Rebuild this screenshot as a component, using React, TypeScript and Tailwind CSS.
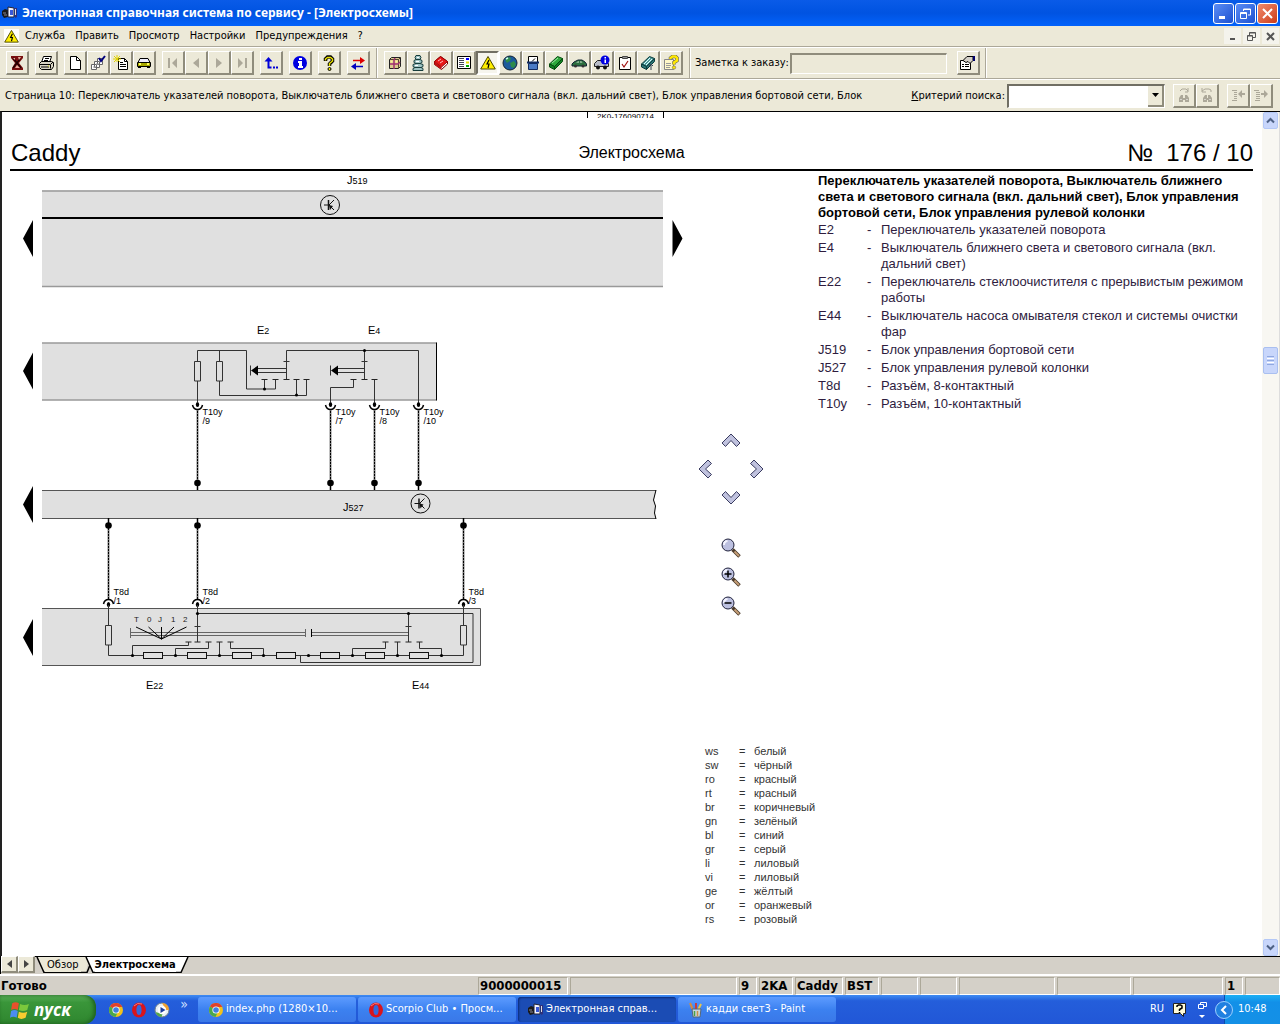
import React from "react";

const UI = "font-['DejaVu_Sans_Condensed','DejaVu_Sans',sans-serif]";

/* ---------- toolbar icons ---------- */

function Ico({ children, size = 16 }: { children: React.ReactNode; size?: number }) {
  return (
    <svg width={size} height={size} viewBox="0 0 16 16" fill="none" aria-hidden="true">
      {children}
    </svg>
  );
}

const icons: Record<string, React.ReactNode> = {
  exit: (
    <>
      <path d="M2 1h12v2l-4 5 4 5v2H3v-2l3-5-4-5z" fill="#7a1010" />
      <path d="M4 3l8 10M11 4l-7 9" stroke="#200" strokeWidth="1.500" />
      <path d="M9 2h3l-2 3zM6 13h5l-3-3zM4 3h2v2z" fill="#e9b0a0" />
    </>
  ),
  print: (
    <>
      <path d="M5.500 1.500h8l-2 6h-8z" fill="#fff" stroke="#000" />
      <path d="M7 3.500h4M6 5.500h4" stroke="#000" />
      <path d="M1.500 8.500l2-2h10l2 1v4l-2 3h-10l-2-2z" fill="#d8d4c4" stroke="#000" />
      <path d="M1.500 9.500h11v4M13 9l2-2M3 12h8" stroke="#000" />
      <path d="M10 11h1" stroke="#dd0" />
    </>
  ),
  page: (
    <>
      <path d="M3.500 1.500h6l4 4v9h-10z" fill="#fff" stroke="#000" />
      <path d="M9.500 1.500v4h4" stroke="#000" />
    </>
  ),
  pages: (
    <>
      <path d="M7.500 3.500h5v6h-5zM4.500 6.500h5v6h-5zM1.500 9.500h5v5h-5z" fill="#fff" stroke="#666" />
      <path d="M3 12h3M6 9h3" stroke="#999" />
      <path d="M9 3l2 3 4-5" stroke="#00007c" strokeWidth="2" />
    </>
  ),
  newdoc: (
    <>
      <path d="M5.500 3.500h6l3 3v8h-9z" fill="#fff" stroke="#000" />
      <path d="M11.500 3.500v3h3M7 7.500h3M7 9.500h6M7 11.500h6" stroke="#000" />
      <path d="M4 0v7M0 4h8M1 1l6 6M7 1L1 7" stroke="#e2d400" />
    </>
  ),
  car: (
    <>
      <path d="M4 3.500h8l2 4H2z" fill="#eef" stroke="#000" />
      <path d="M1.500 7.500h13v4h-13z" fill="#a8a800" stroke="#000" />
      <path d="M2 12h3v1H2zM11 12h3v1h-3z" fill="#000" />
      <path d="M3 9h2M11 9h2" stroke="#ff6" strokeWidth="2" />
    </>
  ),
  first: <path d="M3 3h2v10H3zM12 3v10L7 8z" fill="#aca899" />,
  prev: <path d="M11 3v10L5 8z" fill="#aca899" />,
  next: <path d="M5 3v10l6-5z" fill="#aca899" />,
  last: <path d="M11 3h2v10h-2zM4 3v10l5-5z" fill="#aca899" />,
  back: (
    <>
      <path d="M5.500 4v8.500h3" stroke="#0000d8" strokeWidth="2" />
      <path d="M1.500 6.500l4-4.500 4 4.500z" fill="#0000d8" />
      <path d="M10 11.500h2v2h-2zM13 11.500h2v2h-2z" fill="#0000d8" />
    </>
  ),
  info: (
    <>
      <circle cx="8" cy="8" r="7" fill="#0000e0" />
      <path d="M7 3h3v2H7zM6 6h4v5h1v2H6v-2h1V8H6z" fill="#fff" />
    </>
  ),
  help: (
    <>
      <path d="M4.500 6V4l2-2h3l2 2v2L8.500 9v2" stroke="#000" strokeWidth="3.500" />
      <path d="M4.500 5.500V4l2-1.500h3l2 1.500v2L8.500 8.500V11" stroke="#e8e000" strokeWidth="1.500" />
      <circle cx="8.500" cy="14" r="1.500" fill="#e8e000" stroke="#000" />
    </>
  ),
  swap: (
    <>
      <path d="M3 5.500h8" stroke="#d00" strokeWidth="1.500" />
      <path d="M10 2l5 3.500L10 9z" fill="#d00" />
      <path d="M5 11.500h8" stroke="#0000c0" strokeWidth="1.500" />
      <path d="M6 8l-5 3.500L6 15z" fill="#0000c0" />
    </>
  ),
  box: (
    <>
      <path d="M2.500 4.500l2-2h9v9l-2 2h-9z" fill="#dccb8c" stroke="#222" />
      <path d="M2.500 4.500h9v9M11.500 4.500l2-2" stroke="#543" />
      <path d="M8 3L7 5v9M3 9h8l2-2" stroke="#a03070" strokeWidth="1.500" />
      <path d="M3.500 5.500h2v2h-2zM8.500 5.500h2v2h-2z" fill="#fff39a" />
    </>
  ),
  parts: (
    <>
      <path d="M6 .5h4l1 2-1 2 2 1v2l-2 1 3 1v2l-2 1 2 1v2H3v-2l2-1-2-1v-2l3-1-2-1v-2l2-1-1-2z" fill="#9fc4c4" stroke="#163c3c" />
      <path d="M6 4.500h4M6 8.500h4M5 12.500h6" stroke="#163c3c" />
      <path d="M7 2.500h2M6 6.500h3M5 10.500h3" stroke="#fff" />
    </>
  ),
  book: (
    <>
      <path d="M1.500 9.500v-3l6-5 7 5v2.500l-6 5.500z" fill="#fff" stroke="#700" />
      <path d="M1.500 6.500l6-5 7 5-6 5.500z" fill="#e81818" stroke="#900" />
      <path d="M1.500 6.500v3l7 5v-2.500z" fill="#c01010" />
      <path d="M5 6l3-2M7 8l3-2" stroke="#fbb" />
    </>
  ),
  list: (
    <>
      <path d="M1.500 1.500h13v12h-13z" fill="#fff" stroke="#000" />
      <path d="M3 3.500h5M3 5.500h5M3 7.500h5M3 9.500h5M3 11.500h5" stroke="#445" />
      <path d="M10 4h3" stroke="#00f" strokeWidth="2" />
      <path d="M10 7.500h3" stroke="#e6d800" strokeWidth="2" />
      <path d="M10 11h3" stroke="#0a0" strokeWidth="2" />
    </>
  ),
  warn: (
    <>
      <path d="M8 1.500L15.300 14H.7z" fill="#ffee00" stroke="#4a4600" strokeLinejoin="round" />
      <path d="M9 5l-2 4h2l-1 4" stroke="#000" strokeWidth="1.200" />
    </>
  ),
  globe: (
    <>
      <circle cx="8" cy="8" r="7" fill="#1c5a9c" stroke="#123" />
      <path d="M3 5l3-3 3 1-1 3-3 2zM8 8l4-2 2 3-2 4-3-1z" fill="#2e8b4a" />
      <path d="M4 4l2-1" stroke="#cfe" strokeWidth="1.500" />
    </>
  ),
  meter: (
    <>
      <path d="M3.500 1.500h9v6h-9z" fill="#fff" stroke="#000" />
      <path d="M7 6.500l3-3" stroke="#000" />
      <path d="M3.500 8.500h9v6h-9z" fill="#4a7ac4" stroke="#112a60" />
      <path d="M2 7.500h12" stroke="#112a60" strokeWidth="2" />
    </>
  ),
  green: (
    <>
      <path d="M1.500 9l8-7.500 5 2-8 8z" fill="#2ea83c" stroke="#064c10" />
      <path d="M1.500 9l5 2.500v3l-5-2.500zM6.500 11.500l8-8v3l-8 8z" fill="#118022" stroke="#064c10" />
      <path d="M4 8l6-5" stroke="#9de6a4" />
    </>
  ),
  greencar: (
    <>
      <path d="M1 9l2-2 4-2h4l3 2 1.500 2v2H1z" fill="#2c7040" stroke="#123" />
      <path d="M5 7.500l2-1h1v1zM9 6.500h1.500l1 1H9z" fill="#d8e8d8" />
      <circle cx="4.500" cy="11" r="1.500" fill="#333" />
      <circle cx="12" cy="11" r="1.500" fill="#333" />
    </>
  ),
  carinfo: (
    <>
      <path d="M.5 11.500V8.500l3-3h5l4 3h2v3z" fill="#b8bcc8" stroke="#222" />
      <circle cx="4" cy="12.500" r="2" fill="#111" />
      <circle cx="11" cy="12.500" r="2" fill="#111" />
      <circle cx="11" cy="5" r="4.500" fill="#0000e0" />
      <path d="M10.500 2H12v1.500h-1.500zM10.500 4.500H12V8h-1.500z" fill="#fff" />
    </>
  ),
  check: (
    <>
      <path d="M2.500 2.500h11v12h-11z" fill="#fff" stroke="#000" />
      <path d="M5.500 1.500h5v2h-5z" fill="#999" stroke="#444" />
      <path d="M5 9l2 3 4-6" stroke="#a01010" strokeWidth="1.200" />
    </>
  ),
  teal: (
    <>
      <path d="M1.500 9l8-7.500 5 2-8 8z" fill="#4f9a9a" stroke="#0c3c3c" />
      <path d="M1.500 9l5 2.500v3l-5-2.500zM6.500 11.500l8-8v3l-8 8z" fill="#2a7474" stroke="#0c3c3c" />
      <path d="M4 9l6-6M6 10l6-6" stroke="#dff" />
      <path d="M11 15V9M9 11l2-2 2 2" stroke="#345" />
    </>
  ),
  question: (
    <>
      <path d="M1.500 4.500h9v10h-9z" fill="#fff8c8" stroke="#888" />
      <path d="M3 8.500h5M3 10.500h5M3 12.500h4" stroke="#999" />
      <path d="M7.500 4V3l2-1.500h3L14 3v2.500l-3 2v2" stroke="#555" strokeWidth="3.500" />
      <path d="M7.500 4V3l2-1.500h3L14 3v2.500l-3 2v2" stroke="#ffe800" strokeWidth="2.500" />
      <circle cx="11" cy="12.500" r="1.700" fill="#ffe800" stroke="#555" strokeWidth=".5" />
    </>
  ),
  note: (
    <>
      <path d="M.5 5.500h10v9H.5z" fill="#fff" stroke="#000" />
      <path d="M2 9.500h2M5 9.500h4M2 11.500h2M5 11.500h4" stroke="#000" />
      <path d="M3 5.500l4-4h6v4l-3 3-2-2-2 1z" fill="#d4d0c8" stroke="#000" />
      <path d="M13 1h2v5h-2z" fill="#00006c" />
    </>
  ),
  findNext: (
    <>
      <path d="M3 15v-4l2-3h2v3h2V8h2l2 3v4H9v-2H7v2z" fill="#aca899" />
      <path d="M4 4l2-2h4l2 2M12 1v4H9" stroke="#aca899" />
      <path d="M4.500 12.500h1M10.500 12.500h1" stroke="#fff" />
    </>
  ),
  findPrev: (
    <>
      <path d="M4 15v-4l2-3h2v3h1V8h2l2 3v4H9v-2H8v2z" fill="#aca899" />
      <path d="M12 5V3l-2-1H6L3 4M3 1v4h4" stroke="#aca899" />
      <path d="M5.500 12.500h1M10.500 12.500h1" stroke="#fff" />
    </>
  ),
  outdent: (
    <>
      <path d="M2 3.500h5M4 5.500h3M4 7.500h3M4 9.500h3M4 11.500h3M2 13.500h5" stroke="#aca899" />
      <path d="M8 7l4-4v3h3v2h-3v3z" fill="#aca899" />
    </>
  ),
  indent: (
    <>
      <path d="M1 3.500h5M3 5.500h4M3 7.500h4M3 9.500h4M3 11.500h4M2 13.500h5" stroke="#aca899" />
      <path d="M15 7l-4-4v3H8v2h3v3z" fill="#aca899" />
    </>
  ),
};

function AppGlyph({ size = 16 }: { size?: number }) {
  return (
    <Ico size={size}>
      <path d="M0 6l3-2 3 1v7l-4 1-2-3z" fill="#1a1a1a" />
      <path d="M1 8h3M2 10h3" stroke="#889" />
      <path d="M6 2l6 1v9H6z" fill="#f4f4ff" stroke="#223" />
      <path d="M8 5h3v5H8z" fill="#3858d8" />
      <path d="M12 3h3v9l-2 1z" fill="#30307c" />
      <path d="M13 4h1v6h-1z" fill="#ddd" />
    </Ico>
  );
}

function ChromeGlyph() {
  return (
    <Ico>
      <circle cx="8" cy="8" r="7" fill="#f2c21c" />
      <path d="M8 8L2 4.400A7 7 0 0 1 14.200 5H8z" fill="#e0402c" />
      <path d="M8 8L2 4.400A7 7 0 0 0 7.500 15L10 9.500z" fill="#4aa84c" />
      <circle cx="8" cy="8" r="3.600" fill="#fff" />
      <circle cx="8" cy="8" r="2.800" fill="#3f7fe0" />
    </Ico>
  );
}

function OperaGlyph() {
  return (
    <Ico>
      <ellipse cx="8" cy="8" rx="7" ry="7.500" fill="#d8141c" />
      <path d="M3 4a7 7 0 0 1 8-2" stroke="#f47a7a" />
      <ellipse cx="8" cy="8" rx="2.600" ry="5" fill="#3468dc" />
    </Ico>
  );
}

function MediaGlyph() {
  return (
    <Ico>
      <circle cx="8" cy="8" r="7" fill="#e8eef4" stroke="#6b7c8c" />
      <path d="M8 1a7 7 0 0 1 7 7h-3z" fill="#f0a030" />
      <path d="M1.500 10a7 7 0 0 0 6 5l1-3z" fill="#55a848" />
      <circle cx="8" cy="8" r="4.200" fill="#fff" />
      <path d="M6.500 5l5 3-5 3z" fill="#1c3c9c" />
    </Ico>
  );
}

function PaintGlyph() {
  return (
    <Ico>
      <path d="M5 8L2 1" stroke="#d88a3c" strokeWidth="2" />
      <path d="M8 8V1" stroke="#c83c3c" strokeWidth="2" />
      <path d="M10 8l3-6" stroke="#e8c84c" strokeWidth="2" />
      <path d="M4 7h9l-1 8H5z" fill="#c8d4dc" stroke="#567" />
      <path d="M6.500 9v5" stroke="#48a048" strokeWidth="1.500" />
      <path d="M9.500 9v5" stroke="#c89048" strokeWidth="1.500" />
    </Ico>
  );
}

/* ---------- toolbar parts ---------- */

function ToolButton({ icon, label, active = false, disabled = false }: { icon: string; label: string; active?: boolean; disabled?: boolean }) {
  return (
    <button
      type="button"
      aria-label={label}
      disabled={disabled}
      className={
        active
          ? "flex h-6 w-[23px] shrink-0 items-center justify-center border-2 border-t-[#716f64] border-l-[#716f64] border-r-white border-b-white bg-[#f6f5ee]"
          : "flex h-6 w-[23px] shrink-0 items-center justify-center border-t border-l border-r-2 border-b-2 border-t-white border-l-white border-r-[#8f8c7c] border-b-[#8f8c7c] bg-[#ece9d8]"
      }
    >
      <Ico>{icons[icon]}</Ico>
    </button>
  );
}

function Group({ children }: { children: React.ReactNode }) {
  return <div className="flex">{children}</div>;
}

function Divider() {
  return <div className="h-[30px] w-[2px] shrink-0 border-r border-l border-r-white border-l-[#aca899]" />;
}

/* ---------- wiring diagram ---------- */

function Label({ x, y, head, sub }: { x: number; y: number; head: string; sub: string }) {
  return (
    <text x={x} y={y} fontSize="11" fill="#000">
      {head}
      <tspan fontSize="9">{sub}</tspan>
    </text>
  );
}

function Transistor({ x, y }: { x: number; y: number }) {
  return (
    <g stroke="#111" fill="none">
      <circle cx={x} cy={y} r="9.500" />
      <path d={`M${x - 6} ${y}h6M${x + 4} ${y - 5}l-5 5l5 5`} />
      <path d={`M${x - 1.5} ${y - 5}v10`} strokeWidth="1.500" />
      <path d={`M${x - 1} ${y}l4 1l-3 4z`} fill="#111" stroke="none" />
    </g>
  );
}

function Ticks({ xs, y }: { xs: number[]; y: number }) {
  return <path d={xs.map((x) => `M${x - 3} ${y}h6`).join("")} stroke="#222" />;
}

function Dots({ points, r }: { points: number[][]; r: number }) {
  return (
    <g fill="#000">
      {points.map(([x, y]) => (
        <circle key={`${x}-${y}`} cx={x} cy={y} r={r} />
      ))}
    </g>
  );
}

const upperPins = [
  { x: 197.5, pin: "/9" },
  { x: 330.5, pin: "/7" },
  { x: 374.5, pin: "/8" },
  { x: 418.5, pin: "/10" },
];
const lowerPins = [
  { x: 108.5, pin: "/1" },
  { x: 197.5, pin: "/2" },
  { x: 463.5, pin: "/3" },
];
const chainResistors = [143.5, 187.5, 232.5, 276.5, 320.5, 365.5, 409.5];
const modes: [number, string][] = [
  [134, "T"],
  [147, "0"],
  [158, "J"],
  [171, "1"],
  [183, "2"],
];

function Diagram() {
  return (
    <svg
      width="688"
      height="530"
      viewBox="2 171 688 530"
      fill="none"
      className="shrink-0 font-['Liberation_Sans_Narrow','Liberation_Sans',sans-serif]"
      role="img"
      aria-label="Электросхема"
    >
      <path
        d="M42 190.500h621v96H42zM42 343h394.500v57H42zM42 490.500h614l-2 9 1.500 7-1 7 1.500 5H42zM42 608.500h438.500v57H42z"
        fill="#e0e0e0"
      />
      <path d="M42 191h621M42 286.500h621M42 343h394.500M42 400h394.500" stroke="#999" strokeWidth="1.500" />
      <path d="M42 218h621" stroke="#000" strokeWidth="2" />
      <path d="M436.500 342.500v58" stroke="#000" />
      <path d="M42 490.500h614M42 518.500h614M42 608.500h438.500v57H42" stroke="#555" />
      <path d="M656 490l-2.500 10 2 6-1 7 1.500 6" stroke="#000" />
      <path d="M33 220v37l-10-18.500zM33 352.500v37L23 371zM33 486v37l-10-18.500zM33 619v37l-10-18.500zM672.500 220v37l10-18.500z" fill="#000" />
      <Transistor x={330} y={205} />
      <Transistor x={420.500} y={503.500} />

      <g stroke="#333">
        <path d="M197.500 402V381M197.500 361.500v-11h49v38.500h29v-9.500M264.500 379.500v9.500M219.500 350.500v11M219.500 381v14.500h87v-16M296.500 379.500v16" />
        <path d="M194.500 361.500h6v19.500h-6zM216.500 361.500h6v19.500h-6z" />
        <path d="M286.500 379.500v-29h132v52M283.500 361.500h6M258 368.500h28.500M258 372.500h28.500M250.500 365.500v10" />
        <path d="M364.500 350.500v29M361.500 361.500h6M337 368.500h27.500M337 372.500h27.500M330.500 365.500v10M353.500 379.500v8h-23V402M374.500 379.500V402" />
      </g>
      <path d="M251 370.500l7-5v10zM331 370.500l7-5v10z" fill="#000" />
      <Ticks xs={[264.5, 275.5, 286.5, 296.5, 306.5, 353.5, 364.5, 374.500]} y={379.500} />
      <Dots points={[[264.5, 389], [296.5, 395], [364.5, 350.5]]} r={1.500} />

      {upperPins.map(({ x, pin }) => (
        <g key={pin}>
          <path d={`M${x} 410V490`} stroke="#000" strokeWidth="1.500" />
          <path d={`M${x} 410V480`} stroke="#777" strokeDasharray="1 2" strokeWidth="1" />
          <path d={`M${x - 5} 405q1 4.500 5 4.500q4 0 5 -4.500`} stroke="#000" strokeWidth="1.500" />
          <ellipse cx={x} cy={404.500} rx={1.700} ry={2.500} fill="#000" />
          <circle cx={x} cy={483} r={3.300} fill="#000" />
          <text x={x + 5} y={415} fontSize="9" fill="#000">T10y</text>
          <text x={x + 5} y={424} fontSize="9" fill="#000">{pin}</text>
        </g>
      ))}

      {lowerPins.map(({ x, pin }) => (
        <g key={pin}>
          <path d={`M${x} 518V600`} stroke="#000" strokeWidth="1.500" />
          <path d={`M${x} 530V598`} stroke="#777" strokeDasharray="1 2" strokeWidth="1" />
          <path d={`M${x - 5} 604q1 -4.500 5 -4.500q4 0 5 4.500`} stroke="#000" strokeWidth="1.500" />
          <ellipse cx={x} cy={604.500} rx={1.700} ry={2.500} fill="#000" />
          <circle cx={x} cy={525.500} r={3.300} fill="#000" />
          <text x={x + 5} y={595} fontSize="9" fill="#000">T8d</text>
          <text x={x + 5} y={604} fontSize="9" fill="#000">{pin}</text>
        </g>
      ))}

      <g stroke="#333">
        <path d="M108.500 605v20M108.500 645v10.500h355V645M463.500 605v20" />
        <path d="M105.500 625.500h6v19.500h-6zM460.500 625.500h6v19.500h-6z" fill="#e0e0e0" />
        <path d="M130.500 628v10M130.500 632.500h175M130.500 635.500h175M305.500 629v8M311.500 632.500h97M311.500 635.500h97" stroke="#666" />
        <path d="M136 627l25.500 12M148.500 627l13 12M161.500 627v12M174 627l-12.500 12M186.500 627l-25 12M311.500 629v8" stroke="#000" />
        <path d="M197.500 605v37M194.500 626.500h6M197.500 613.500h275.500v49H300.500v-7M408.500 613.500v28.500M405.500 626.500h6" />
        <path d="M188.500 642v3.500h-56v10M208.500 642v6.500h-33v7M219.500 642v13.500M230.500 642v6.500h33v7" />
        <path d="M385.500 642v6.500h-33v7M397.500 642v13.500M419.500 642v6.500h22v7" />
        {chainResistors.map((x) => (
          <rect key={x} x={x} y={652.500} width={19} height={6} fill="#e0e0e0" stroke="#111" />
        ))}
      </g>
      <Ticks xs={[188.5, 197.5, 208.5, 219.5, 230.5, 385.5, 397.5, 408.5, 419.500]} y={642} />
      <Dots
        points={[[132.5, 655.5], [175.5, 655.5], [219.5, 655.5], [263.5, 655.5], [308.5, 655.5], [352.5, 655.5], [397.5, 655.5], [441.5, 655.5], [197.5, 613.5], [408.5, 613.5]]}
        r={1.600}
      />
      {modes.map(([x, t]) => (
        <text key={t} x={x} y={622} fontSize="8" fill="#222">
          {t}
        </text>
      ))}

      <Label x={347} y={184} head="J" sub="519" />
      <Label x={257} y={334} head="E" sub="2" />
      <Label x={368} y={334} head="E" sub="4" />
      <Label x={343} y={511} head="J" sub="527" />
      <Label x={146} y={689} head="E" sub="22" />
      <Label x={412} y={689} head="E" sub="44" />
    </svg>
  );
}

/* ---------- viewer controls ---------- */

const chevrons: Record<string, string> = {
  up: "M10 4l9 9-3.500 3.500-5.500-6-5.500 6L1 13z",
  down: "M10 16l9-9-3.500-3.500-5.500 6-5.500-6L1 7z",
  left: "M4 10l9-9 3.500 3.500-6 5.500 6 5.500L13 19z",
  right: "M16 10L7 1 3.500 4.500l6 5.500-6 5.500L7 19z",
};

function Chevron({ dir, label, place }: { dir: string; label: string; place: string }) {
  return (
    <button type="button" aria-label={label} className={place}>
      <svg width="20" height="20" viewBox="0 0 20 20">
        <path d={chevrons[dir]} fill="#c0c2de" stroke="#3a3c60" />
      </svg>
    </button>
  );
}

function Magnifier({ sign, label }: { sign: string; label: string }) {
  return (
    <button type="button" aria-label={label} className="flex h-[29px] w-[26px] items-center justify-center">
      <svg width="20" height="20" viewBox="0 0 20 20" fill="none">
        <path d="M11.500 11.500l7 7" stroke="#4c3c2c" strokeWidth="3.500" />
        <path d="M13.500 13.500l4.500 4.500" stroke="#c8a078" strokeWidth="1.800" />
        <circle cx="7" cy="7" r="6" fill="#bcc0e0" stroke="#20223c" />
        <path d="M3 7a4 4 0 0 1 3.500-4" stroke="#f4f4ff" strokeWidth="2" />
        {sign === "plus" && <path d="M7 3.500v7M3.500 7h7" stroke="#000" strokeWidth="1.500" />}
        {sign === "minus" && <path d="M3.500 7h7" stroke="#000" strokeWidth="1.500" />}
      </svg>
    </button>
  );
}

const colours: [string, string][] = [
  ["ws", "белый"],
  ["sw", "чёрный"],
  ["ro", "красный"],
  ["rt", "красный"],
  ["br", "коричневый"],
  ["gn", "зелёный"],
  ["bl", "синий"],
  ["gr", "серый"],
  ["li", "лиловый"],
  ["vi", "лиловый"],
  ["ge", "жёлтый"],
  ["or", "оранжевый"],
  ["rs", "розовый"],
];

const legend: [string, string[]][] = [
  ["E2", ["Переключатель указателей поворота"]],
  ["E4", ["Выключатель ближнего света и светового сигнала (вкл.", "дальний свет)"]],
  ["E22", ["Переключатель стеклоочистителя с прерывистым режимом", "работы"]],
  ["E44", ["Выключатель насоса омывателя стекол и системы очистки", "фар"]],
  ["J519", ["Блок управления бортовой сети"]],
  ["J527", ["Блок управления рулевой колонки"]],
  ["T8d", ["Разъём, 8-контактный"]],
  ["T10y", ["Разъём, 10-контактный"]],
];

function ScrollButton({ up }: { up: boolean }) {
  return (
    <button
      type="button"
      aria-label={up ? "Прокрутить вверх" : "Прокрутить вниз"}
      className="flex h-[17px] w-[15px] items-center justify-center rounded-xs border border-[#b4c8f6] bg-[#c8d6fb]"
    >
      <svg width="9" height="9" viewBox="0 0 9 9" fill="none">
        <path d={up ? "M1 6.500l3.500-3.500L8 6.500" : "M1 2.500L4.500 6 8 2.500"} stroke="#4d6185" strokeWidth="2" />
      </svg>
    </button>
  );
}

function Viewer() {
  return (
    <main className="flex min-h-0 flex-1 overflow-hidden border-t border-l-2 border-black border-l-[#222] bg-white font-['Liberation_Sans',Arial,sans-serif]">
      <div className="flex min-w-0 flex-1 flex-col pr-[9px] pl-2">
        <div className="h-[6px] overflow-hidden pl-[577px]">
          <span className="block h-[10px] w-[77px] border-x border-black pt-px text-center text-[8px] leading-[8px]">2K0-176090714</span>
        </div>
        <header className="grid h-[53px] grid-cols-3 items-end border-b-2 border-black pb-[2px]">
          <h1 className="pl-px text-[24px] leading-[28px]">Caddy</h1>
          <h2 className="pb-1 text-center text-[16px] leading-5">Электросхема</h2>
          <p className="text-right text-[24px] leading-[28px] whitespace-pre">№  176 / 10</p>
        </header>
        <div className="-ml-2 flex flex-1">
          <Diagram />
          <div className="flex w-32 shrink-0 flex-col justify-between pt-[254px] pb-[30px]">
            <div className="flex flex-col gap-[21px] pl-[2px]">
              <div className="grid w-[78px] grid-cols-3 grid-rows-[29px_29px_29px] items-center justify-items-center">
                <Chevron dir="up" label="Вверх" place="col-start-2" />
                <Chevron dir="left" label="Влево" place="col-start-1 row-start-2" />
                <Chevron dir="right" label="Вправо" place="col-start-3 row-start-2" />
                <Chevron dir="down" label="Вниз" place="col-start-2 row-start-3" />
              </div>
              <div className="flex w-[78px] flex-col items-center">
                <Magnifier sign="" label="Исходный размер" />
                <Magnifier sign="plus" label="Увеличить" />
                <Magnifier sign="minus" label="Уменьшить" />
              </div>
            </div>
            <table className="ml-[15px] w-28 text-[11px] leading-[14px] text-[#333]">
              <tbody>
                {colours.map(([code, name]) => (
                  <tr key={code}>
                    <td className="w-[34px] p-0">{code}</td>
                    <td className="w-[15px] p-0">=</td>
                    <td className="p-0">{name}</td>
                  </tr>
                ))}
              </tbody>
            </table>
          </div>
          <section className="min-w-0 flex-1 pt-[2px] text-[13px] leading-4">
            <h3 className="font-bold whitespace-nowrap">
              Переключатель указателей поворота, Выключатель ближнего
              <br />
              света и светового сигнала (вкл. дальний свет), Блок управления
              <br />
              бортовой сети, Блок управления рулевой колонки
            </h3>
            <dl className="flex flex-col gap-[2px] pt-px text-[#2e1c3e]">
              {legend.map(([code, lines]) => (
                <div key={code} className="flex">
                  <dt className="flex w-[63px] shrink-0">
                    <span className="w-[49px]">{code}</span>
                    <span>-</span>
                  </dt>
                  <dd className="whitespace-nowrap">
                    {lines.map((l) => (
                      <span key={l} className="block">
                        {l}
                      </span>
                    ))}
                  </dd>
                </div>
              ))}
            </dl>
          </section>
        </div>
      </div>
      <div className="flex w-[18px] shrink-0 flex-col items-center border-r border-[#ddd] bg-[#f8f7f2]">
        <ScrollButton up />
        <div className="flex-[218]" />
        <div className="flex h-[27px] w-[15px] flex-col items-center justify-center gap-px rounded-xs border border-[#a9bff0] bg-[#c8d6fb]">
          <i className="h-px w-[7px] bg-[#8fa8e0]" />
          <i className="h-px w-[7px] bg-white" />
          <i className="h-px w-[7px] bg-[#8fa8e0]" />
          <i className="h-px w-[7px] bg-white" />
          <i className="h-px w-[7px] bg-[#8fa8e0]" />
        </div>
        <div className="flex-[564]" />
        <ScrollButton up={false} />
      </div>
    </main>
  );
}

/* ---------- window frame ---------- */

function TitleBar() {
  const base = "flex size-[21px] items-center justify-center rounded-[3px] border border-white";
  return (
    <div className="flex h-[26px] shrink-0 items-center bg-linear-to-b from-[#0a5be8] via-[#0053e1] to-[#0362fb] pr-[2px] pl-[2px]">
      <AppGlyph />
      <h1 className="flex-1 pl-1 font-['Noto_Sans',sans-serif] text-[12px] leading-4 font-bold whitespace-nowrap text-white">
        Электронная справочная система по сервису - [Электросхемы]
      </h1>
      <button type="button" aria-label="Свернуть" className={`${base} mr-px bg-linear-to-br from-[#5b8cf5] to-[#1d50d0]`}>
        <svg width="13" height="13" viewBox="0 0 13 13"><path d="M2 9h6v3H2z" fill="#fff" /></svg>
      </button>
      <button type="button" aria-label="Восстановить" className={`${base} mr-px bg-linear-to-br from-[#5b8cf5] to-[#1d50d0]`}>
        <svg width="13" height="13" viewBox="0 0 13 13" fill="none" stroke="#fff"><path d="M4.500 4V2h7v6H9M4.500 2.500h7M1.500 5.500h6v6h-6zM1.500 6.500h6" /></svg>
      </button>
      <button type="button" aria-label="Закрыть" className={`${base} bg-linear-to-br from-[#f08a6c] to-[#cc3a12]`}>
        <svg width="13" height="13" viewBox="0 0 13 13" fill="none" stroke="#fff" strokeWidth="2"><path d="M2 2l9 9M11 2l-9 9" /></svg>
      </button>
    </div>
  );
}

function MenuBar() {
  const items = ["Служба", "Править", "Просмотр", "Настройки", "Предупреждения", "?"];
  const mdi = "flex h-4 w-[17px] items-center justify-center bg-[#f4f3ec]";
  return (
    <div className="flex h-[21px] shrink-0 items-center border-b border-[#aca899] pl-1">
      <span className="flex h-[15px] w-[15px] items-center justify-center bg-white">
        <Ico size={15}>{icons.warn}</Ico>
      </span>
      <nav className="flex flex-1 gap-[10px] pl-[6px]">
        {items.map((i) => (
          <button key={i} type="button" className="text-[11px] leading-4">
            {i}
          </button>
        ))}
      </nav>
      <div className="flex gap-[2px] pr-px">
        <button type="button" aria-label="Свернуть документ" className={mdi}>
          <svg width="9" height="9" viewBox="0 0 9 9"><path d="M2 6h5v2H2z" fill="#555" /></svg>
        </button>
        <button type="button" aria-label="Восстановить документ" className={mdi}>
          <svg width="9" height="9" viewBox="0 0 9 9" fill="none" stroke="#555"><path d="M2.500 3V.5h6v5H6M2.500 1h6M.5 3.500h5v5h-5zM.5 4h5" /></svg>
        </button>
        <button type="button" aria-label="Закрыть документ" className={mdi}>
          <svg width="9" height="9" viewBox="0 0 9 9" fill="none" stroke="#555" strokeWidth="2"><path d="M1 1l7 7M8 1L1 8" /></svg>
        </button>
      </div>
    </div>
  );
}

function Toolbar() {
  return (
    <div className="flex h-8 shrink-0 items-center border-t border-b border-t-white border-b-[#aca899] pl-[6px]">
      <div className="flex gap-[6px]">
        <ToolButton icon="exit" label="Выход" />
        <ToolButton icon="print" label="Печать" />
        <Group>
          <ToolButton icon="page" label="Новый заказ" />
          <ToolButton icon="pages" label="Выбор заказа" />
          <ToolButton icon="newdoc" label="Новый документ" />
          <ToolButton icon="car" label="Автомобиль" />
        </Group>
        <Group>
          <ToolButton icon="first" label="Первая страница" disabled />
          <ToolButton icon="prev" label="Предыдущая страница" disabled />
          <ToolButton icon="next" label="Следующая страница" disabled />
          <ToolButton icon="last" label="Последняя страница" disabled />
        </Group>
        <ToolButton icon="back" label="Назад" />
        <ToolButton icon="info" label="Информация" />
        <ToolButton icon="help" label="Справка" />
        <ToolButton icon="swap" label="Переключить" />
      </div>
      <div className="flex items-center gap-[6px] pl-[6px]">
        <Divider />
        <Group>
          <ToolButton icon="box" label="Каталог" />
          <ToolButton icon="parts" label="Узлы" />
          <ToolButton icon="book" label="Руководство" />
          <ToolButton icon="list" label="Таблица" />
          <ToolButton icon="warn" label="Электросхемы" active />
          <ToolButton icon="globe" label="Сеть" />
          <ToolButton icon="meter" label="Измерения" />
          <ToolButton icon="green" label="Обслуживание" />
          <ToolButton icon="greencar" label="Кузов" />
          <ToolButton icon="carinfo" label="Данные автомобиля" />
          <ToolButton icon="check" label="Контрольный лист" />
          <ToolButton icon="teal" label="Литература" />
          <ToolButton icon="question" label="Вопросы" />
        </Group>
        <Divider />
      </div>
      <label htmlFor="note" className="pl-1 text-[11px] leading-4 whitespace-nowrap">
        Заметка к заказу:
      </label>
      <input
        id="note"
        className="mr-[10px] ml-px h-[21px] w-[157px] border border-t-2 border-l-2 border-t-[#8f8c7c] border-r-white border-b-white border-l-[#8f8c7c] bg-[#ece9d8] px-1 text-[11px]"
      />
      <div className="flex items-center gap-[5px]">
        <ToolButton icon="note" label="Открыть заметку" />
        <Divider />
      </div>
    </div>
  );
}

function SearchBar() {
  return (
    <div className="flex h-8 shrink-0 items-center border-t border-white pr-[7px] pl-[5px]">
      <p className="flex-1 text-[11px] leading-4 whitespace-nowrap">
        Страница 10: Переключатель указателей поворота, Выключатель ближнего света и светового сигнала (вкл. дальний свет), Блок управления бортовой сети, Блок
      </p>
      <label htmlFor="criterion" className="text-[11px] leading-4 whitespace-nowrap">
        <u>К</u>ритерий поиска:
      </label>
      <div className="relative mr-2 ml-[2px] flex h-6 w-[158px] border border-t-2 border-l-2 border-t-[#716f64] border-r-white border-b-white border-l-[#716f64] bg-white">
        <select id="criterion" className="h-full w-full appearance-none bg-transparent px-1 text-[11px]">
          <option></option>
        </select>
        <span className="pointer-events-none absolute inset-y-0 right-0 flex w-4 items-center justify-center border-r-2 border-b-2 border-[#8f8c7c] bg-[#ece9d8]">
          <svg width="7" height="4" viewBox="0 0 7 4"><path d="M0 0h7L3.500 4z" /></svg>
        </span>
      </div>
      <div className="flex gap-2">
        <Group>
          <ToolButton icon="findNext" label="Найти далее" disabled />
          <ToolButton icon="findPrev" label="Найти ранее" disabled />
        </Group>
        <Group>
          <ToolButton icon="outdent" label="К предыдущему" disabled />
          <ToolButton icon="indent" label="К следующему" disabled />
        </Group>
      </div>
    </div>
  );
}

function SheetTabs() {
  const arrow = "flex h-[17px] w-[17px] items-center justify-center border-t border-l border-r-2 border-b-2 border-t-white border-l-white border-r-[#8f8c7c] border-b-[#8f8c7c] bg-[#ece9d8]";
  return (
    <div className="flex h-[18px] shrink-0 border-l border-black bg-[#d4d0c8]">
      <button type="button" aria-label="Вкладки влево" className={arrow}>
        <svg width="5" height="8" viewBox="0 0 5 8"><path d="M5 0v8L0 4z" fill="#444" /></svg>
      </button>
      <button type="button" aria-label="Вкладки вправо" className={arrow}>
        <svg width="5" height="8" viewBox="0 0 5 8"><path d="M0 0v8l5-4z" fill="#444" /></svg>
      </button>
      <div className="flex flex-1 border-t border-black">
        <svg width="10" height="16" viewBox="0 0 10 16"><path d="M2 0l7 15h1V0z" fill="#ece9d8" /><path d="M2 0l7 15.500h1" fill="none" stroke="#000" strokeWidth="1.500" /></svg>
        <button type="button" className="h-4 border-b border-black bg-[#ece9d8] px-[2px] text-[11px] leading-4">Обзор</button>
        <svg width="14" height="16" viewBox="0 0 14 16"><path d="M0 0h8L5 15H0z" fill="#ece9d8" /><path d="M5 0l7 15h2V0z" fill="#fff" /><path d="M5 0l7 15.500h2M9 8l-3 7.500H0" fill="none" stroke="#000" strokeWidth="1.500" /></svg>
        <button type="button" className="h-4 border-b border-black bg-white text-[11px] leading-4 font-bold">Электросхема</button>
        <svg width="14" height="16" viewBox="0 0 14 16"><path d="M0 0h12L5 15H0z" fill="#fff" /><path d="M12 0L5 15.500H0" fill="none" stroke="#000" strokeWidth="1.500" /></svg>
      </div>
    </div>
  );
}

function StatusBar() {
  const cell = "h-[18px] shrink-0 overflow-hidden border border-t-[#aca899] border-r-white border-b-white border-l-[#aca899] pl-px whitespace-nowrap";
  return (
    <div className="flex h-[21px] shrink-0 items-center gap-[2px] border-t-2 border-white bg-[#d4d0c8] text-[13px] leading-4 font-bold">
      <span className="flex-1 pl-px">Готово</span>
      <span className={`${cell} w-[90px]`}>9000000015</span>
      <span className={`${cell} w-[167px]`} />
      <span className={`${cell} w-[18px]`}>9</span>
      <span className={`${cell} w-[34px]`}>2KA</span>
      <span className={`${cell} w-[48px]`}>Caddy</span>
      <span className={`${cell} w-[34px]`}>BST</span>
      <span className={`${cell} w-[37px]`} />
      <span className={`${cell} w-[37px]`} />
      <span className={`${cell} w-[96px]`} />
      <span className={`${cell} w-[74px]`} />
      <span className={`${cell} w-[90px]`} />
      <span className={`${cell} w-[18px]`}>1</span>
      <span className={`${cell} w-[35px]`} />
    </div>
  );
}

function TaskButton({ icon, children, active = false }: { icon: React.ReactNode; children: React.ReactNode; active?: boolean }) {
  return (
    <button
      type="button"
      className={
        active
          ? "flex h-[25px] w-[158px] items-center gap-[2px] rounded-[3px] bg-[#1b4cb4] px-[10px] text-[11px] whitespace-nowrap text-white shadow-[inset_1px_1px_2px_#0c2c78]"
          : "flex h-[25px] w-[158px] items-center gap-[2px] rounded-[3px] bg-linear-to-b from-[#5c9bff] via-[#3c81f0] to-[#3a78e8] px-[10px] text-[11px] whitespace-nowrap text-white"
      }
    >
      {icon}
      <span>{children}</span>
    </button>
  );
}

function Taskbar() {
  return (
    <footer className="flex h-[29px] shrink-0 items-stretch bg-linear-to-b from-[#3f8cf3] via-[#245edb] via-20% to-[#2157d7]">
      <button
        type="button"
        className="flex w-24 items-center gap-1 rounded-r-xl bg-linear-to-b from-[#5cb25c] via-[#3a963a] via-25% to-[#2f862f] pl-[10px] font-['Open_Sans',sans-serif] text-[17px] leading-5 font-bold text-white italic shadow-[inset_-2px_0_4px_#1c5c1c]"
      >
        <svg width="20" height="20" viewBox="0 0 18 18">
          <path d="M2 3q3-2 6 0L7 9Q4 7 1 9z" fill="#e8502c" />
          <path d="M9 3.500q4 2 8 0L15.500 9q-4 2-7.500 0z" fill="#7cc83c" />
          <path d="M1 10q3-2 6 0l-1 6q-3-2-6 0z" fill="#4c8cf0" />
          <path d="M8 10.500q4 2 7.500 0L14 16q-4 2-7 0z" fill="#f8cc30" />
        </svg>
        пуск
      </button>
      <div className="flex items-center gap-[7px] pl-3">
        <button type="button" aria-label="Chrome"><ChromeGlyph /></button>
        <button type="button" aria-label="Opera"><OperaGlyph /></button>
        <button type="button" aria-label="Media Player"><MediaGlyph /></button>
      </div>
      <button type="button" aria-label="Ещё" className="w-7 pb-3 text-[14px] leading-3 text-[#cfe0ff]">»</button>
      <div className="flex flex-1 items-center gap-[2px]">
        <TaskButton icon={<ChromeGlyph />}>index.php (1280×10...</TaskButton>
        <TaskButton icon={<OperaGlyph />}>Scorpio Club • Просм...</TaskButton>
        <TaskButton icon={<AppGlyph />} active>Электронная справ...</TaskButton>
        <TaskButton icon={<PaintGlyph />}>кадди свет3 - Paint</TaskButton>
      </div>
      <div className="flex items-center text-[11px] text-white">
        <span>RU</span>
        <svg className="ml-2" width="15" height="15" viewBox="0 0 15 15" fill="none">
          <path d="M1.500 1.500h12v10h-2v3l-3-3h-7z" fill="#fffbd8" stroke="#222" />
          <path d="M5 5V4l1.500-1h2L10 4v2L7.500 7.500V9M7.500 10v1" stroke="#000" strokeWidth="1.500" />
        </svg>
        <svg className="ml-[10px]" width="10" height="20" viewBox="0 0 10 20" fill="none">
          <path d="M3.500 4V2.500h6v4H7M1.500 4.500h5v4h-5z" stroke="#fff" />
          <path d="M2 15h6l-3 3z" fill="#fff" />
        </svg>
        <button type="button" aria-label="Скрыть значки" className="z-10 -mr-[9px] ml-2 flex size-[18px] items-center justify-center rounded-full border border-[#9cd0ff] bg-[#2080e0]">
          <svg width="8" height="10" viewBox="0 0 8 10" fill="none"><path d="M6 1L2 5l4 4" stroke="#fff" strokeWidth="2" /></svg>
        </button>
        <div className="flex h-full w-14 items-center border-l border-[#0c4cae] bg-linear-to-b from-[#1cb0f4] via-[#1290e8] via-25% to-[#1490e6] pl-[13px]">10:48</div>
      </div>
    </footer>
  );
}

export default function App() {
  return (
    <div className={`flex h-screen min-h-[720px] flex-col overflow-hidden bg-[#ece9d8] text-black ${UI}`}>
      <TitleBar />
      <MenuBar />
      <Toolbar />
      <SearchBar />
      <Viewer />
      <SheetTabs />
      <StatusBar />
      <Taskbar />
    </div>
  );
}
